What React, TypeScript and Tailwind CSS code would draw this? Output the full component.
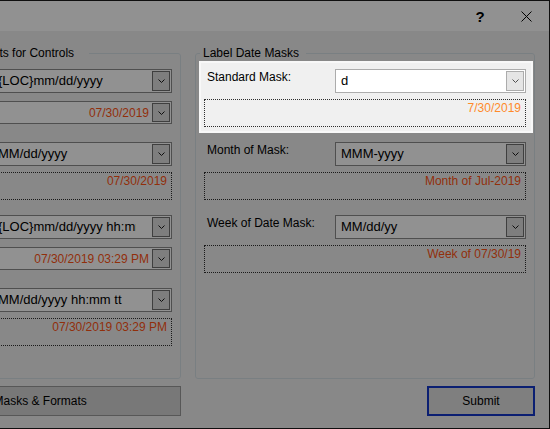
import { ReactNode } from 'react';

const FONT = "font-['Liberation_Sans',Arial,sans-serif]";

function Chevron({ soft }: { soft?: boolean }) {
  return (
    <svg width="7" height="4" viewBox="0 0 7 4" className="block">
      <path d="M0.5 0.5L3.5 3.5L6.5 0.5" fill="none" stroke={soft ? '#505050' : '#1a1a1a'} strokeWidth="1" />
    </svg>
  );
}

function DropButton({ soft }: { soft?: boolean }) {
  return (
    <span
      className={`flex w-[18px] shrink-0 self-stretch items-center justify-center border ${
        soft ? 'border-[#acacac] bg-[#e5e5e5]' : 'border-[#6f6f6f] bg-[#dedede]'
      }`}
    >
      <Chevron soft={soft} />
    </span>
  );
}

function Combo({ value, soft }: { value: string; soft?: boolean }) {
  return (
    <div className={`flex h-[24px] items-center border bg-white p-[1px] ${soft ? 'border-[#acacac]' : 'border-[#8b8b8b]'}`}>
      <span className="mr-[16px] min-w-0 flex-1 overflow-hidden whitespace-nowrap pl-[4px] text-[13px] leading-[16px] text-black">
        {value}
      </span>
      <DropButton soft={soft} />
    </div>
  );
}

function DatePicker({ value }: { value: string }) {
  return (
    <div className="mt-[8px] flex h-[23px] items-center border border-[#8b8b8b] bg-white p-[1px]">
      <span className="min-w-0 flex-1 whitespace-nowrap pr-[3px] text-right text-[12px] leading-[14px] text-[#ff5414]">{value}</span>
      <DropButton />
    </div>
  );
}

function Preview({ text, soft }: { text: string; soft?: boolean }) {
  return (
    <div
      className={`mt-[6px] h-[28px] border border-dotted border-[#2e2e2e] pt-[1px] pr-[4px] text-right text-[12px] leading-[14px] ${
        soft ? 'text-[#ff8a2a]' : 'text-[#ff5414]'
      }`}
    >
      {text}
    </div>
  );
}

// label + combo on one line; a picker sits under the combo, a preview spans the row
function Row({
  label,
  labelWidth,
  combo,
  picker,
  preview,
}: {
  label: string;
  labelWidth: string;
  combo: ReactNode;
  picker?: ReactNode;
  preview?: ReactNode;
}) {
  return (
    <div className="h-[58px]">
      <div className="flex">
        <div className={`${labelWidth} shrink-0 whitespace-nowrap pl-[3px] pt-[1px] text-[12px] leading-[14px] text-black`}>{label}</div>
        <div className="min-w-0 flex-1">
          {combo}
          {picker}
        </div>
      </div>
      {preview}
    </div>
  );
}

function Group({ title, className, gapRight, children }: { title: string; className: string; gapRight: string; children: ReactNode }) {
  return (
    <fieldset className={`${className} min-w-0 rounded-[3px] border border-[#d5dfe5] px-[8px] pt-[9px]`}>
      <legend className={`-ml-[4px] pl-[3px] ${gapRight} whitespace-nowrap text-[12px] leading-[14px] text-black`}>{title}</legend>
      <div className="flex flex-col gap-[15px]">{children}</div>
    </fieldset>
  );
}

export default function App() {
  return (
    <div className={`relative h-[429px] w-[550px] overflow-hidden bg-black ${FONT}`}>
      <div className="-ml-[160px] flex h-[429px] w-[710px] flex-col border-y border-r border-[#1c1c1c] bg-[#f0f0f0]">
        {/* title bar */}
        <div className="flex h-[30px] shrink-0 justify-end bg-white">
          <div className="flex w-[46px] items-center justify-center text-[15px] font-bold leading-none text-black">?</div>
          <div className="flex w-[46px] items-center justify-center">
            <svg width="11" height="11" viewBox="0 0 11 11">
              <path d="M0.5 0.5L10.5 10.5M10.5 0.5L0.5 10.5" stroke="#000" strokeWidth="1" />
            </svg>
          </div>
        </div>

        <div className="flex flex-1 flex-col px-[14px] pt-[15px] pb-[12px]">
          <div className="flex flex-1 gap-[14px]">
            <Group title="Default Masks and Formats for Controls" className="w-[327px] shrink-0" gapRight="pr-[15px]">
              <Row
                label="Date Picker Mask:"
                labelWidth="w-[129px]"
                combo={<Combo value="{LOC}mm/dd/yyyy" />}
                picker={<DatePicker value="07/30/2019" />}
              />
              <Row
                label="Date Label Mask:"
                labelWidth="w-[129px]"
                combo={<Combo value="MM/dd/yyyy" />}
                preview={<Preview text="07/30/2019" />}
              />
              <Row
                label="Time Picker Mask:"
                labelWidth="w-[129px]"
                combo={<Combo value="{LOC}mm/dd/yyyy hh:mm tt" />}
                picker={<DatePicker value="07/30/2019 03:29 PM" />}
              />
              <Row
                label="Time Label Mask:"
                labelWidth="w-[129px]"
                combo={<Combo value="MM/dd/yyyy hh:mm tt" />}
                preview={<Preview text="07/30/2019 03:29 PM" />}
              />
            </Group>

            <Group title="Label Date Masks" className="flex-1" gapRight="pr-[7px]">
              <Row
                label="Standard Mask:"
                labelWidth="w-[131px]"
                combo={<Combo value="d" soft />}
                preview={<Preview text="7/30/2019" soft />}
              />
              <Row
                label="Month of Mask:"
                labelWidth="w-[131px]"
                combo={<Combo value="MMM-yyyy" />}
                preview={<Preview text="Month of Jul-2019" />}
              />
              <Row
                label="Week of Date Mask:"
                labelWidth="w-[131px]"
                combo={<Combo value="MM/dd/yy" />}
                preview={<Preview text="Week of 07/30/19" />}
              />
            </Group>
          </div>

          <div className="mt-[7px] flex h-[30px] justify-between">
            <button className="w-[327px] border border-[#9a9a9a] bg-[#d4d4d4] text-[12px] text-black">Restore Masks &amp; Formats</button>
            <button className="w-[108px] border-2 border-[#1437c8] bg-[#e0e0e0] text-[12px] text-black">Submit</button>
          </div>
        </div>
      </div>

      {/* spotlight on the standard mask row */}
      <div className="pointer-events-none absolute left-[199px] top-[61px] h-[72px] w-[334px] shadow-[0_0_0_9999px_rgba(0,0,0,0.43)] inset-ring-2 inset-ring-white/50" />
    </div>
  );
}
